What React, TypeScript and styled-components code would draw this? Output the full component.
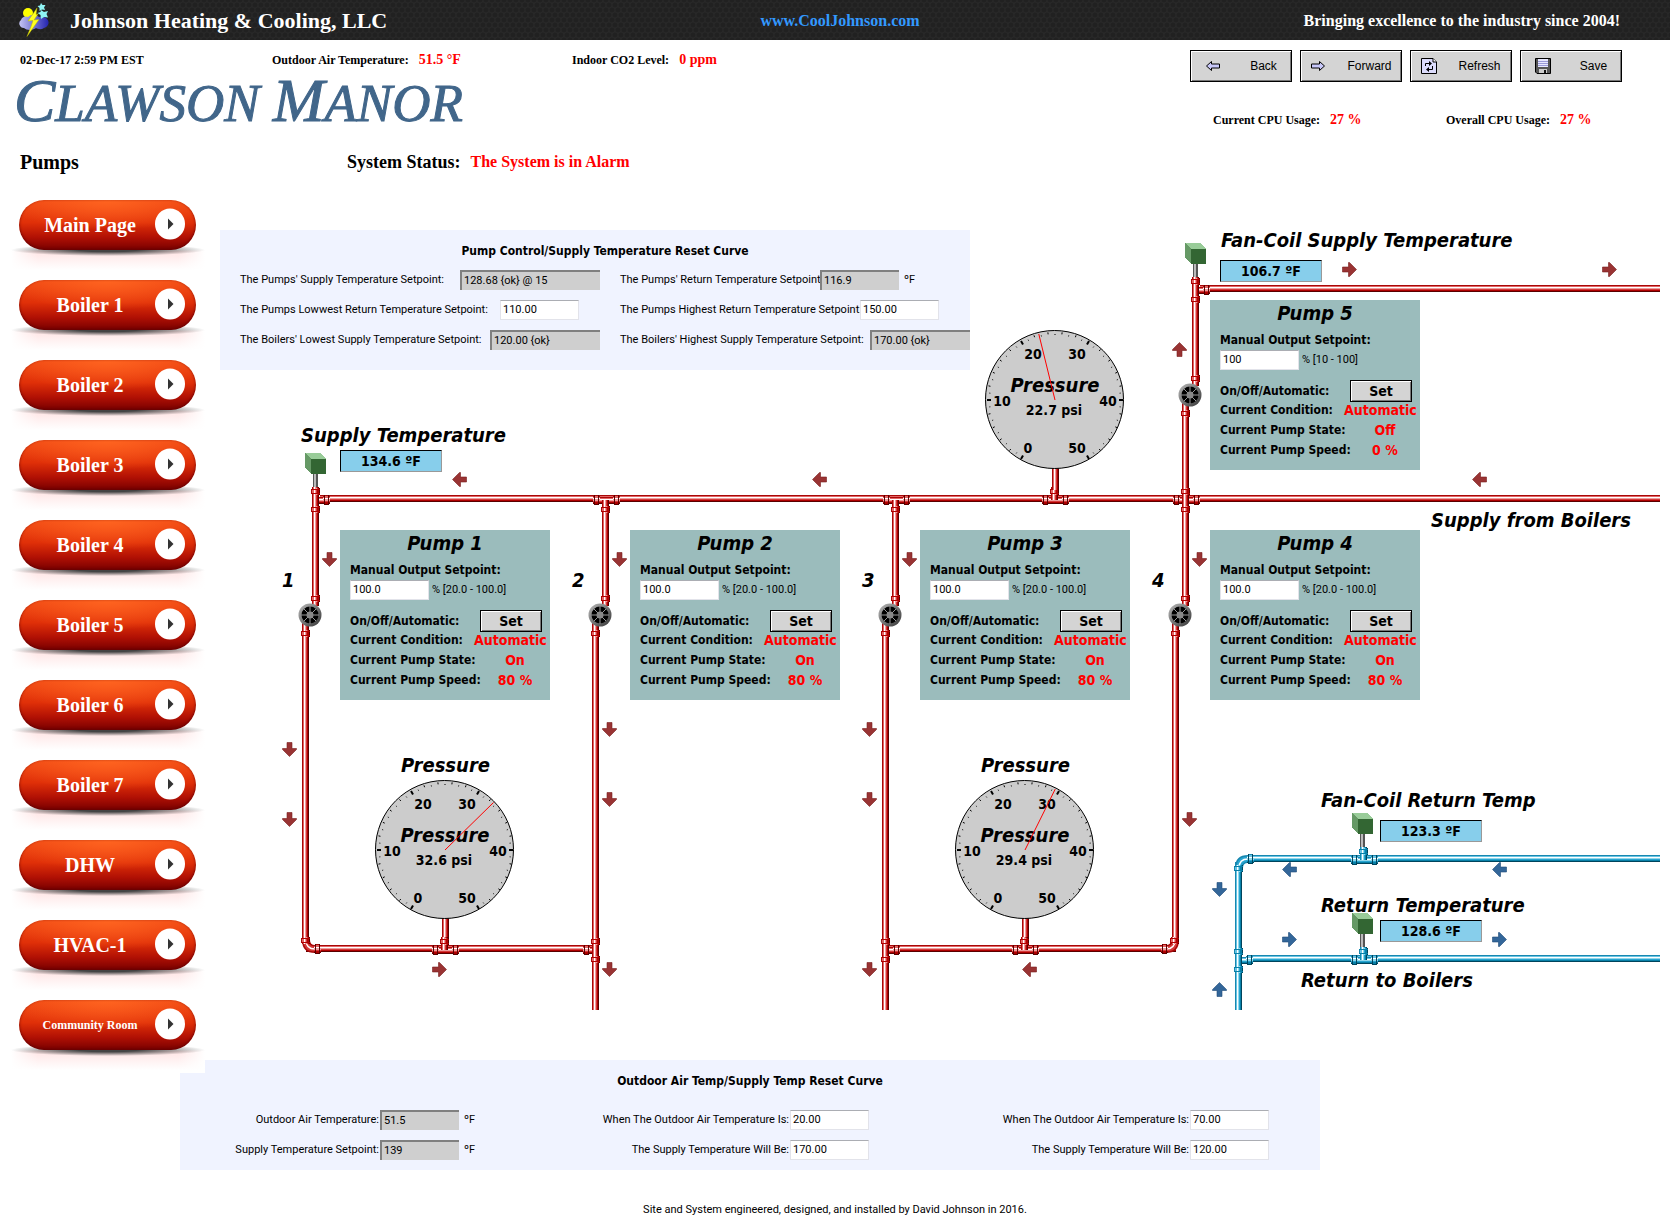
import React from "react";
import styled, { createGlobalStyle, css } from "styled-components";

const tahoma = `"DejaVu Sans Condensed", "DejaVu Sans", sans-serif`;
const tahomaSmall = `Roboto, "Noto Sans", sans-serif`;
const times = `"Liberation Serif", serif`;

/* Plan coordinates of the schematic's top left corner. */
const ORIGIN_X = 220;
const ORIGIN_Y = 190;
const PLAN_W = 1450;
const PLAN_H = 870;

const GlobalStyle = createGlobalStyle`
  * { box-sizing: border-box; }
  body { margin: 0; background: #fff; color: #000; font-family: ${tahoma}; }
  button, input { font: inherit; color: inherit; border-radius: 0; }
`;

const Page = styled.div`
  min-width: 1660px;
  overflow-x: hidden;
`;

/* ---------- header ---------- */

const Banner = styled.header`
  display: grid;
  grid-template-columns: 1fr auto 1fr;
  align-items: center;
  height: 40px;
  padding: 2px 0 0 10px;
  color: #fff;
  font: bold 16px/20px ${times};
  background-color: #222;
  background-image: radial-gradient(circle, #212121 2px, transparent 3px),
    radial-gradient(circle, #212121 2px, transparent 3px),
    linear-gradient(#292929, #292929);
  background-size: 6px 10px, 6px 10px, auto;
  background-position: 0 0, 3px 5px, 0 0;
`;

const Brand = styled.h1`
  display: flex;
  align-items: center;
  gap: 20px;
  margin: 0;
  padding-left: 9px;
  font: bold 22px/26px ${times};
`;

const SiteLink = styled.a`
  color: #3399ff;
  text-decoration: none;
`;

const Slogan = styled.p`
  margin: 0;
  padding-right: 50px;
  text-align: right;
`;

/* ---------- page summary ---------- */

const Summary = styled.section`
  display: flex;
  justify-content: space-between;
  height: 150px;
  padding: 10px 48px 0 20px;
  font-family: ${times};
  font-weight: bold;
`;

const InfoRow = styled.div`
  display: grid;
  grid-template-columns: 252px 300px auto;
  align-items: center;
  height: 20px;
  font-size: 12px;
`;

const Reading = styled.div`
  display: flex;
  align-items: center;
  gap: 10px;
  font-size: 12px;
  line-height: 20px;
`;

const Alert = styled.span<{ $size?: number }>`
  color: #f00;
  font-size: ${(p) => p.$size ?? 14}px;
`;

const Wordmark = styled.div`
  height: 60px;
  margin-left: -6px;
  color: #41668a;
  font: italic 53px/60px ${times};
  white-space: nowrap;
  -webkit-text-stroke: 1px #41668a;
`;

const BigCap = styled.span`
  font-size: 62px;
`;

const TitleRow = styled.div`
  display: grid;
  grid-template-columns: 327px auto;
  align-items: center;
  height: 24px;
  margin-top: 20px;
`;

const PageTitle = styled.h2`
  margin: 0;
  font-size: 20px;
`;

const StatusLine = styled(Reading)`
  font-size: 18px;
`;

const Toolbar = styled.div`
  display: flex;
  gap: 8px;
`;

const bevel = css`
  border: 1px solid #000;
  background: #d4d4d4;
  box-shadow: inset 1px 1px 0 #fff, inset -1px -1px 0 #777;
`;

const ToolButton = styled.button<{ $gap: number }>`
  ${bevel}
  display: flex;
  align-items: center;
  justify-content: center;
  gap: ${(p) => p.$gap}px;
  width: 102px;
  height: 32px;
  padding: 0;
  font: 12px/16px "Liberation Sans", sans-serif;
`;

const CpuRow = styled.div`
  display: grid;
  grid-template-columns: 233px auto;
  margin: 28px 0 0 23px;
`;

/* ---------- navigation ---------- */

const Main = styled.main`
  display: flex;
  align-items: flex-start;
`;

const Nav = styled.nav`
  position: relative;
  z-index: 1;
  display: flex;
  flex-direction: column;
  gap: 7px;
  width: 205px;
  padding: 10px 0 0 11px;
  margin: 0 15px -16px 0;
`;

const NavItem = styled.div`
  height: 73px;
  padding: 0 9px 0 8px;
  background-color: #fff;
  background-image: radial-gradient(ellipse 50% 6px at 50% 50px, #444 30%, rgba(255, 255, 255, 0) 100%),
    linear-gradient(90deg, #fff 0, rgba(255, 255, 255, 0) 14%, rgba(255, 255, 255, 0) 86%, #fff 100%),
    linear-gradient(#fff 50px, #ffe4e4 51px, #fff 70px);
`;

const NavLink = styled.a<{ $small?: boolean }>`
  display: flex;
  align-items: center;
  justify-content: space-between;
  height: 50px;
  padding: 0 11px 3px 6px;
  border-radius: 25px;
  color: #fff;
  font: bold ${(p) => (p.$small ? 12 : 20)}px/24px ${times};
  text-decoration: none;
  background: radial-gradient(ellipse 60% 60% at 50% 0, #ff6420 0, rgba(255, 90, 30, 0) 100%),
    linear-gradient(#f04814, #e03008 45%, #b01004 75%, #780000 100%);
  box-shadow: inset 0 -1px 3px #600;
`;

const NavText = styled.span`
  flex: 1;
  padding-top: 3px;
  text-align: center;
`;

/* ---------- fields ---------- */

const Panel = styled.section`
  background: #f0f3ff;
  font: 11px/20px ${tahomaSmall};
`;

const PanelTitle = styled.h3`
  margin: 0;
  text-align: center;
  font: bold 12px/22px ${tahoma};
`;

const Field = styled.input<{ $w: number }>`
  flex: none;
  width: ${(p) => p.$w}px;
  height: 20px;
  padding: 0 2px;
  border: 1px solid #e2e3ea;
  border-top-color: #abadb3;
  background: #fff;
  font-size: 11px;

  &:read-only {
    border: 0 solid #808080;
    border-width: 2px 0 0 2px;
    background: #cfcfcf;
  }
`;

const ControlPanel = styled(Panel)`
  position: relative;
  width: 750px;
  height: 140px;
  padding: 10px 0 0 20px;
  overflow: hidden;
`;

const ControlGrid = styled.div`
  display: grid;
  grid-template-columns: 360px 1fr;
  column-gap: 20px;
  row-gap: 10px;
  margin-top: 8px;
`;

const ControlRow = styled.div<{ $label: number }>`
  display: grid;
  grid-template-columns: ${(p) => p.$label}px auto 1fr;
  white-space: nowrap;
`;

const Unit = styled.span`
  padding-left: 5px;
`;

const ResetPanel = styled(Panel)`
  height: 110px;
  margin: 0 350px 0 180px;
  padding: 10px 30px 0 30px;
`;

const ResetGrid = styled.div`
  display: grid;
  grid-template-columns: 280px 410px 390px;
  row-gap: 10px;
  margin-top: 18px;
`;

const ResetRow = styled.div<{ $last?: boolean }>`
  display: grid;
  grid-template-columns: 1fr ${(p) => (p.$last ? 100 : 110)}px;
  white-space: nowrap;
`;

const ResetLabel = styled.label`
  padding-right: 1px;
  text-align: right;
`;

const ResetValue = styled.div`
  display: flex;
`;

const Footer = styled.footer`
  padding: 30px 0 5px;
  text-align: center;
  font: 11px/20px ${tahomaSmall};
`;

/* ---------- schematic ---------- */

const Schematic = styled.section`
  position: relative;
  flex: 1;
  min-width: 0;
  height: ${PLAN_H}px;
  padding-top: 40px;
`;

const Drawing = styled.svg`
  position: absolute;
  left: 0;
  top: 0;
`;

type At = { $x: number; $y: number };

const placed = css<At>`
  position: absolute;
  left: ${(p) => p.$x - ORIGIN_X}px;
  top: ${(p) => p.$y - ORIGIN_Y}px;
`;

const Caption = styled.div<At>`
  ${placed}
  font: italic bold 20px/22px ${tahoma};
  white-space: nowrap;
`;

const Temperature = styled.output<At>`
  ${placed}
  width: 102px;
  height: 22px;
  border: 1px solid #000;
  border-right-color: #999;
  border-bottom-color: #999;
  background: #87ceeb;
  text-align: center;
  font: bold 14px/21px ${tahoma};
`;

const Card = styled.section<At>`
  ${placed}
  width: 210px;
  height: 170px;
  padding: 2px 0 0 10px;
  background: #9bbcbc;
  font: bold 12px/20px ${tahoma};
  white-space: nowrap;
`;

const CardTitle = styled.h3`
  margin: 0 10px 6px 0;
  text-align: center;
  font: italic bold 20px/22px ${tahoma};
`;

const CardLabel = styled.label`
  display: block;
`;

const SetpointRow = styled.div`
  display: flex;
  gap: 3px;
  height: 20px;
  margin-bottom: 10px;
  font: 11px/20px ${tahomaSmall};
`;

const Range = styled.span`
  width: 77px;
  overflow: hidden;
`;

const CardRow = styled.div`
  display: grid;
  grid-template-columns: 124px 72px;
  align-items: center;
  height: 20px;
`;

const CardValue = styled.output<{ $short?: boolean }>`
  padding-left: ${(p) => (p.$short ? 10 : 0)}px;
  color: #f00;
  font-size: 14px;
  text-align: center;
`;

const SetButton = styled.button`
  ${bevel}
  justify-self: center;
  width: 62px;
  height: 22px;
  margin-left: 2px;
  padding: 0;
  font: bold 14px/18px ${tahoma};
`;

const GaugeFace = styled.div<At>`
  ${placed}
  width: 140px;
  height: 140px;
  font: bold 14px/20px ${tahoma};
`;

const GaugeText = styled.span<{ $cx: number; $cy: number; $title?: boolean }>`
  position: absolute;
  left: ${(p) => p.$cx + 20}px;
  top: ${(p) => p.$cy + 60}px;
  width: 100px;
  text-align: center;
  ${(p) => p.$title && `font: italic bold 20px/20px ${tahoma};`}
`;

const Needle = styled.svg`
  position: absolute;
  inset: 0;
`;

/* ---------- drawings ---------- */

const Logo = () => (
  <svg width="31" height="36" viewBox="0 0 31 36" aria-hidden="true">
    <defs>
      <linearGradient id="cloud">
        <stop offset="0" stopColor="#c4c4f4" />
        <stop offset="1" stopColor="#2424b0" />
      </linearGradient>
    </defs>
    <circle cx="9" cy="10" r="5" fill="#ffff00" />
    <path d="M5 25a4.500 4.500 0 0 1-3-8a5 4 0 0 1 7-3a7 6 0 0 1 11 0a6 5 0 0 1 5 11c-3 2-6 1-8 0c-2 2-9 3-12 0z" fill="url(#cloud)" />
    <path d="M22 0l1.500 2l3 0l-1.500 2.500l1 2.500l-3-.5l-2.500 1.500l0-3l-2-2l2.500-.5zM22 7l3 2l4-1l-1.500 3l1.500 3.500l-4-.5l-3 2l-.5-4l-3-2l3-1z" fill="#8ff4f4" />
    <path d="M18 5l-9 13l5-.5l-2 6l-4 10l12-17l-5 .5l4-6l-2 .5z" fill="#ffff20" stroke="#b8b800" strokeWidth=".5" />
  </svg>
);

const ArrowIcon = ({ flip }: { flip?: boolean }) => (
  <svg width="16" height="16" viewBox="0 0 16 16" aria-hidden="true">
    <path
      d="M1.500 8L6.500 3.500V6H14.500V10H6.500V12.500Z"
      fill="#c8c8fa"
      stroke="#000"
      transform={flip ? "translate(16 0) scale(-1 1)" : undefined}
    />
  </svg>
);

const RefreshIcon = () => (
  <svg width="16" height="16" viewBox="0 0 16 16" aria-hidden="true">
    <path d="M.5.5H12L15.5 4V15.5H.5Z" fill="#dcdcfc" stroke="#000" />
    <path d="M12 .5V4H15.5" fill="#fff" stroke="#000" />
    <path d="M4.500 8V5.500H9M11.500 8V11.500H7" fill="none" stroke="#000" />
    <path d="M8 3L11 5.500L8 8ZM8 9L5 11.500L8 14Z" />
  </svg>
);

const SaveIcon = () => (
  <svg width="16" height="16" viewBox="0 0 16 16" aria-hidden="true">
    <path d="M.5.5H15.500V15.500H2L.5 14Z" fill="#555" stroke="#000" />
    <rect x="3" y="1" width="10" height="8" fill="#e8e8ff" />
    <path d="M3 3.500H13M3 5.500H13M3 7.500H13" stroke="#9a9ad8" />
    <rect x="4" y="11" width="8" height="4" fill="#ccc" />
    <rect x="9" y="12" width="2" height="3" fill="#111" />
  </svg>
);

const PlayDot = () => (
  <svg width="30" height="32" viewBox="0 0 30 32" aria-hidden="true">
    <ellipse cx="15" cy="16" rx="15" ry="15.500" fill="#fff" />
    <path d="M13 10.500L18.500 16L13 21.500Z" fill="#333" />
  </svg>
);

type Tint = "red" | "blue";

const stripes: Record<Tint, string[]> = {
  red: ["#a80808", "#e46464", "#ffffff", "#f09c9c", "#d43838", "#b00000", "#580000"],
  blue: ["#1888b0", "#68c4e4", "#ffffff", "#90d8ec", "#28a4d0", "#0880a8", "#00445c"],
};

const PipeGradient = ({ tint, dir }: { tint: Tint; dir: "h" | "v" }) => (
  <linearGradient id={`${tint}-${dir}`} x1="0" y1="0" x2={dir === "v" ? 1 : 0} y2={dir === "h" ? 1 : 0}>
    {stripes[tint].map((c, i) => (
      <React.Fragment key={c}>
        <stop offset={i / 7} stopColor={c} />
        <stop offset={(i + 1) / 7} stopColor={c} />
      </React.Fragment>
    ))}
  </linearGradient>
);

const HPipe = ({ x, x2, y, tint = "red" }: { x: number; x2: number; y: number; tint?: Tint }) => (
  <rect x={x} y={y} width={x2 - x} height="7" fill={`url(#${tint}-h)`} />
);
const VPipe = ({ x, y, y2, tint = "red" }: { x: number; y: number; y2: number; tint?: Tint }) => (
  <rect x={x} y={y} width="7" height={y2 - y} fill={`url(#${tint}-v)`} />
);

/* A union collar: a wide ring, shaded at its edges, with a narrower lip either side. */
const HCollar = ({ x, y, tint = "red" }: { x: number; y: number; tint?: Tint }) => (
  <g fill={`url(#${tint}-h)`}>
    <rect x={x - 3} y={y - 4} width="7" height="8" />
    <rect x={x - 2} y={y - 5} width="5" height="10" fill={stripes[tint][6]} />
    <rect x={x - 1} y={y - 5} width="3" height="10" />
  </g>
);
const VCollar = ({ x, y, tint = "red" }: { x: number; y: number; tint?: Tint }) => (
  <g fill={`url(#${tint}-v)`}>
    <rect x={x - 4} y={y - 3} width="8" height="7" />
    <rect x={x - 5} y={y - 2} width="9" height="5" fill={stripes[tint][5]} />
    <rect x={x - 5} y={y - 1} width="9" height="3" />
  </g>
);

type Side = "l" | "r" | "u" | "d";

/* Tee, cross or elbow drawn from its centre with a collar on each open side. */
const Fitting = ({ x, y, sides, tint = "red" }: { x: number; y: number; sides: string; tint?: Tint }) => {
  const has = (s: Side) => sides.includes(s);
  return (
    <g>
      {(has("l") || has("r")) && <HPipe x={has("l") ? x - 13 : x} x2={has("r") ? x + 13 : x} y={y - 3} tint={tint} />}
      {(has("u") || has("d")) && <VPipe x={x - 4} y={has("u") ? y - 13 : y} y2={has("d") ? y + 13 : y} tint={tint} />}
      {has("l") && <HCollar x={x - 10} y={y} tint={tint} />}
      {has("r") && <HCollar x={x + 10} y={y} tint={tint} />}
      {has("u") && <VCollar x={x} y={y - 9} tint={tint} />}
      {has("d") && <VCollar x={x} y={y + 9} tint={tint} />}
    </g>
  );
};

/* Quarter bend; the collars sit on the arms that leave toward h and v. */
const Elbow = ({ x, y, h, v, tint = "red" }: { x: number; y: number; h: 1 | -1; v: 1 | -1; tint?: Tint }) => {
  const arc = `M${x} ${y + 9 * v}Q${x} ${y} ${x + 9 * h} ${y}`;
  const [dark, , light, , mid] = stripes[tint];
  return (
    <g>
      <path d={arc} fill="none" stroke={dark} strokeWidth="8" />
      <path d={arc} fill="none" stroke={mid} strokeWidth="5" />
      <path d={arc} fill="none" stroke={light} strokeWidth="1.500" />
      <HCollar x={x + 11 * h} y={y} tint={tint} />
      <VCollar x={x} y={y + 9 * v} tint={tint} />
    </g>
  );
};

const Sensor = ({ x, y }: { x: number; y: number }) => (
  <g transform={`translate(${x} ${y})`} shapeRendering="crispEdges">
    <rect x="8" y="20" width="5" height="14" fill="#555" />
    <rect x="9" y="20" width="2" height="14" fill="#bbb" />
    <path d="M0 0L6 6V21L0 15Z" fill="#669966" />
    <path d="M0 0H16L21 6H6Z" fill="#99cc99" />
    <rect x="6" y="6" width="15" height="15" fill="#336633" />
  </g>
);

const PumpIcon = ({ x, y }: { x: number; y: number }) => (
  <g transform={`translate(${x} ${y})`}>
    <circle r="11.500" fill="url(#pump)" />
    <circle r="8.500" fill="#000" />
    <path d="M-9 0H9M0-9V9M-6-6L6 6M6-6L-6 6" stroke="#999" strokeWidth="1" />
    <circle r="3.500" fill="#888" />
  </g>
);

const turns = { up: 0, right: 90, down: 180, left: 270 };
type Dir = keyof typeof turns;

const FlowArrow = ({ x, y, dir, tint = "red" }: { x: number; y: number; dir: Dir; tint?: Tint }) => (
  <path
    d="M0-7L7 0V1H2.500V7H-2.500V1H-7V0Z"
    fill={tint === "red" ? "#993333" : "#336699"}
    stroke={tint === "red" ? "#7a2020" : "#204c78"}
    strokeWidth=".6"
    transform={`translate(${x - 0.5} ${y - 0.5}) rotate(${turns[dir]})`}
  />
);

const redArrows: [number, number, Dir][] = [
  [460, 480, "left"], [820, 480, "left"], [1480, 480, "left"],
  [1350, 270, "right"], [1610, 270, "right"], [1180, 350, "up"],
  [330, 560, "down"], [620, 560, "down"], [910, 560, "down"], [1200, 560, "down"],
  [290, 750, "down"], [290, 820, "down"],
  [610, 730, "down"], [610, 800, "down"], [610, 970, "down"],
  [870, 730, "down"], [870, 800, "down"], [870, 970, "down"],
  [1190, 820, "down"], [440, 970, "right"], [1030, 970, "left"],
];

const blueArrows: [number, number, Dir][] = [
  [1290, 870, "left"], [1500, 870, "left"], [1220, 890, "down"],
  [1290, 940, "right"], [1500, 940, "right"], [1220, 990, "up"],
];

const Pipework = () => (
  <Drawing width={PLAN_W} height={PLAN_H} viewBox={`${ORIGIN_X} ${ORIGIN_Y} ${PLAN_W} ${PLAN_H}`} aria-hidden="true">
    <defs>
      <PipeGradient tint="red" dir="h" />
      <PipeGradient tint="red" dir="v" />
      <PipeGradient tint="blue" dir="h" />
      <PipeGradient tint="blue" dir="v" />
      <linearGradient id="pump" x1="0" y1="0" x2="1" y2="1">
        <stop offset="0" stopColor="#bbb" />
        <stop offset="1" stopColor="#333" />
      </linearGradient>
    </defs>

    <HPipe x={320} x2={1660} y={495} />
    <HPipe x={1200} x2={1660} y={285} />
    <HPipe x={306} x2={596} y={945} />
    <HPipe x={886} x2={1176} y={945} />

    {[312, 602, 892, 1182].map((x) => (
      <g key={x}>
        <VPipe x={x} y={500} y2={606} />
        <VPipe x={x - 10} y={620} y2={x === 602 || x === 892 ? 1010 : 940} />
        <VCollar x={x + 4} y={598} />
        <VCollar x={x - 6} y={633} />
        <PumpIcon x={x - 2} y={615} />
      </g>
    ))}
    <VPipe x={1192} y={277} y2={386} />
    <VPipe x={1182} y={400} y2={500} />
    <VCollar x={1196} y={378} />
    <VCollar x={1186} y={413} />
    <PumpIcon x={1190} y={395} />

    <Fitting x={316} y={500} sides="rud" />
    <Fitting x={606} y={500} sides="lrd" />
    <Fitting x={896} y={500} sides="lrd" />
    <Fitting x={1055} y={500} sides="lru" />
    <Fitting x={1186} y={500} sides="lrud" />
    <Fitting x={1196} y={290} sides="rud" />

    <VPipe x={1052} y={466} y2={490} />
    <VPipe x={442} y={916} y2={940} />
    <VPipe x={1022} y={916} y2={940} />
    <Fitting x={445} y={950} sides="lru" />
    <Fitting x={1025} y={950} sides="lru" />
    <Elbow x={306} y={949} h={1} v={-1} />
    <Elbow x={1175} y={949} h={-1} v={-1} />
    <Fitting x={596} y={950} sides="lud" />
    <Fitting x={886} y={950} sides="rud" />

    <HPipe x={1250} x2={1660} y={855} tint="blue" />
    <HPipe x={1250} x2={1660} y={955} tint="blue" />
    <VPipe x={1235} y={862} y2={1010} tint="blue" />
    <Elbow x={1239} y={859} h={1} v={1} tint="blue" />
    <Fitting x={1239} y={960} sides="rud" tint="blue" />
    <Fitting x={1364} y={860} sides="lru" tint="blue" />
    <Fitting x={1364} y={960} sides="lru" tint="blue" />

    <Sensor x={305} y={453} />
    <Sensor x={1185} y={243} />
    <Sensor x={1352} y={813} />
    <Sensor x={1352} y={913} />

    {redArrows.map(([x, y, dir]) => (
      <FlowArrow key={`${x}-${y}`} x={x} y={y} dir={dir} />
    ))}
    {blueArrows.map(([x, y, dir]) => (
      <FlowArrow key={`${x}-${y}`} x={x} y={y} dir={dir} tint="blue" />
    ))}
  </Drawing>
);

const polar = (value: number, r: number) => {
  const a = ((30 + value * 6) * Math.PI) / 180;
  return { x: 70 - r * Math.sin(a), y: 70 + r * Math.cos(a) };
};

const Gauge = ({ cx, cy, value }: { cx: number; cy: number; value: number }) => {
  const tip = polar(value, 68);
  return (
    <GaugeFace $x={cx - 70} $y={cy - 70}>
      <svg width="140" height="140" viewBox="0 0 140 140" aria-hidden="true">
        <circle cx="69.500" cy="69.500" r="69" fill="#ccc" stroke="#000" />
        {Array.from({ length: 51 }, (_, i) => {
          const major = i % 10 === 0;
          const a = polar(i, i % 2 ? 66 : 68);
          const b = polar(i, major ? 64 : i % 2 ? 65 : 66);
          return <line key={i} x1={a.x} y1={a.y} x2={b.x} y2={b.y} stroke="#000" strokeWidth={major ? 2 : 1} />;
        })}
      </svg>
      <GaugeText $cx={-22} $cy={-46}>20</GaugeText>
      <GaugeText $cx={22} $cy={-46}>30</GaugeText>
      <GaugeText $cx={-53} $cy={1}>10</GaugeText>
      <GaugeText $cx={53} $cy={1}>40</GaugeText>
      <GaugeText $cx={-27} $cy={48}>0</GaugeText>
      <GaugeText $cx={22} $cy={48}>50</GaugeText>
      <GaugeText $cx={-1} $cy={10}>{value} psi</GaugeText>
      <GaugeText $cx={0} $cy={-15} $title>Pressure</GaugeText>
      <Needle width="140" height="140" viewBox="0 0 140 140" aria-hidden="true">
        <line x1="70" y1="70" x2={tip.x} y2={tip.y} stroke="#f00" />
      </Needle>
    </GaugeFace>
  );
};

/* ---------- page parts ---------- */

type PumpProps = { n: number; x: number; y: number; setpoint: string; range: string; state: string; speed: string };

const PumpCard = ({ n, x, y, setpoint, range, state, speed }: PumpProps) => (
  <Card $x={x} $y={y}>
    <CardTitle>Pump {n}</CardTitle>
    <CardLabel htmlFor={`pump-${n}`}>Manual Output Setpoint:</CardLabel>
    <SetpointRow>
      <Field id={`pump-${n}`} $w={79} defaultValue={setpoint} />
      <Range>{range}</Range>
    </SetpointRow>
    <CardRow>
      <span>On/Off/Automatic:</span>
      <SetButton type="button">Set</SetButton>
    </CardRow>
    <CardRow>
      <span>Current Condition:</span>
      <CardValue>Automatic</CardValue>
    </CardRow>
    <CardRow>
      <span>Current Pump State:</span>
      <CardValue $short>{state}</CardValue>
    </CardRow>
    <CardRow>
      <span>Current Pump Speed:</span>
      <CardValue $short>{speed}</CardValue>
    </CardRow>
  </Card>
);

const controls = [
  { label: "The Pumps' Supply Temperature Setpoint:", at: 220, w: 140, value: "128.68 {ok} @ 15", fixed: true },
  { label: "The Pumps' Return Temperature Setpoint:", at: 200, w: 79, value: "116.9", fixed: true, unit: "ºF" },
  { label: "The Pumps Lowwest Return Temperature Setpoint:", at: 260, w: 79, value: "110.00" },
  { label: "The Pumps Highest Return Temperature Setpoint:", at: 240, w: 79, value: "150.00" },
  { label: "The Boilers' Lowest Supply Temperature Setpoint:", at: 250, w: 110, value: "120.00 {ok}", fixed: true },
  { label: "The Boilers' Highest Supply Temperature Setpoint:", at: 250, w: 110, value: "170.00 {ok}", fixed: true },
];

const resets = [
  { label: "Outdoor Air Temperature:", value: "51.5", fixed: true, unit: "ºF" },
  { label: "When The Outdoor Air Temperature Is:", value: "20.00" },
  { label: "When The Outdoor Air Temperature Is:", value: "70.00" },
  { label: "Supply Temperature Setpoint:", value: "139", fixed: true, unit: "ºF" },
  { label: "The Supply Temperature Will Be:", value: "170.00" },
  { label: "The Supply Temperature Will Be:", value: "120.00" },
];

const pages = [
  "Main Page", "Boiler 1", "Boiler 2", "Boiler 3", "Boiler 4", "Boiler 5",
  "Boiler 6", "Boiler 7", "DHW", "HVAC-1", "Community Room",
];

export default function App() {
  return (
    <Page>
      <GlobalStyle />
      <Banner>
        <Brand>
          <Logo />
          Johnson Heating &amp; Cooling, LLC
        </Brand>
        <SiteLink href="#site">www.CoolJohnson.com</SiteLink>
        <Slogan>Bringing excellence to the industry since 2004!</Slogan>
      </Banner>

      <Summary>
        <div>
          <InfoRow>
            <span>02-Dec-17 2:59 PM EST</span>
            <Reading>Outdoor Air Temperature: <Alert>51.5 °F</Alert></Reading>
            <Reading>Indoor CO2 Level: <Alert>0 ppm</Alert></Reading>
          </InfoRow>
          <Wordmark>
            <BigCap>C</BigCap>LAWSON <BigCap>M</BigCap>ANOR
          </Wordmark>
          <TitleRow>
            <PageTitle>Pumps</PageTitle>
            <StatusLine>System Status: <Alert $size={16}>The System is in Alarm</Alert></StatusLine>
          </TitleRow>
        </div>
        <div>
          <Toolbar>
            <ToolButton type="button" $gap={29}><ArrowIcon />Back</ToolButton>
            <ToolButton type="button" $gap={21}><ArrowIcon flip />Forward</ToolButton>
            <ToolButton type="button" $gap={21}><RefreshIcon />Refresh</ToolButton>
            <ToolButton type="button" $gap={29}><SaveIcon />Save</ToolButton>
          </Toolbar>
          <CpuRow>
            <Reading>Current CPU Usage: <Alert>27 %</Alert></Reading>
            <Reading>Overall CPU Usage: <Alert>27 %</Alert></Reading>
          </CpuRow>
        </div>
      </Summary>

      <Main>
        <Nav>
          {pages.map((name) => (
            <NavItem key={name}>
              <NavLink href="#page" $small={name === "Community Room"}>
                <NavText>{name}</NavText>
                <PlayDot />
              </NavLink>
            </NavItem>
          ))}
        </Nav>

        <Schematic>
          <Caption $x={1321} $y={894}>Return Temperature</Caption>
          <Pipework />
          <ControlPanel>
            <PanelTitle>Pump Control/Supply Temperature Reset Curve</PanelTitle>
            <ControlGrid>
              {controls.map((c, i) => (
                <ControlRow key={c.label} $label={c.at}>
                  <label htmlFor={`control-${i}`}>{c.label}</label>
                  <Field id={`control-${i}`} $w={c.w} defaultValue={c.value} readOnly={c.fixed} />
                  {c.unit && <Unit>{c.unit}</Unit>}
                </ControlRow>
              ))}
            </ControlGrid>
          </ControlPanel>

          <Caption $x={1221} $y={229}>Fan-Coil Supply Temperature</Caption>
          <Caption $x={301} $y={424}>Supply Temperature</Caption>
          <Caption $x={1431} $y={509}>Supply from Boilers</Caption>
          <Caption $x={1321} $y={789}>Fan-Coil Return Temp</Caption>
          <Caption $x={1301} $y={969}>Return to Boilers</Caption>
          <Caption $x={401} $y={754}>Pressure</Caption>
          <Caption $x={981} $y={754}>Pressure</Caption>
          {[1, 2, 3, 4].map((n) => (
            <Caption key={n} $x={-8 + 290 * n} $y={569}>{n}</Caption>
          ))}

          <Temperature $x={340} $y={450}>134.6 ºF</Temperature>
          <Temperature $x={1220} $y={260}>106.7 ºF</Temperature>
          <Temperature $x={1380} $y={820}>123.3 ºF</Temperature>
          <Temperature $x={1380} $y={920}>128.6 ºF</Temperature>

          <Gauge cx={1055} cy={400} value={22.7} />
          <Gauge cx={445} cy={850} value={32.6} />
          <Gauge cx={1025} cy={850} value={29.4} />

          {[1, 2, 3, 4].map((n) => (
            <PumpCard
              key={n}
              n={n}
              x={50 + 290 * n}
              y={530}
              setpoint="100.0"
              range="% [20.0 - 100.0]"
              state="On"
              speed="80 %"
            />
          ))}
          <PumpCard n={5} x={1210} y={300} setpoint="100" range="% [10 - 100]" state="Off" speed="0 %" />
        </Schematic>
      </Main>

      <ResetPanel>
        <PanelTitle>Outdoor Air Temp/Supply Temp Reset Curve</PanelTitle>
        <ResetGrid>
          {resets.map((r, i) => (
            <ResetRow key={i} $last={i % 3 === 2}>
              <ResetLabel htmlFor={`reset-${i}`}>{r.label}</ResetLabel>
              <ResetValue>
                <Field id={`reset-${i}`} $w={79} defaultValue={r.value} readOnly={r.fixed} />
                {r.unit && <Unit>{r.unit}</Unit>}
              </ResetValue>
            </ResetRow>
          ))}
        </ResetGrid>
      </ResetPanel>
      <Footer>Site and System engineered, designed, and installed by David Johnson in 2016.</Footer>
    </Page>
  );
}
